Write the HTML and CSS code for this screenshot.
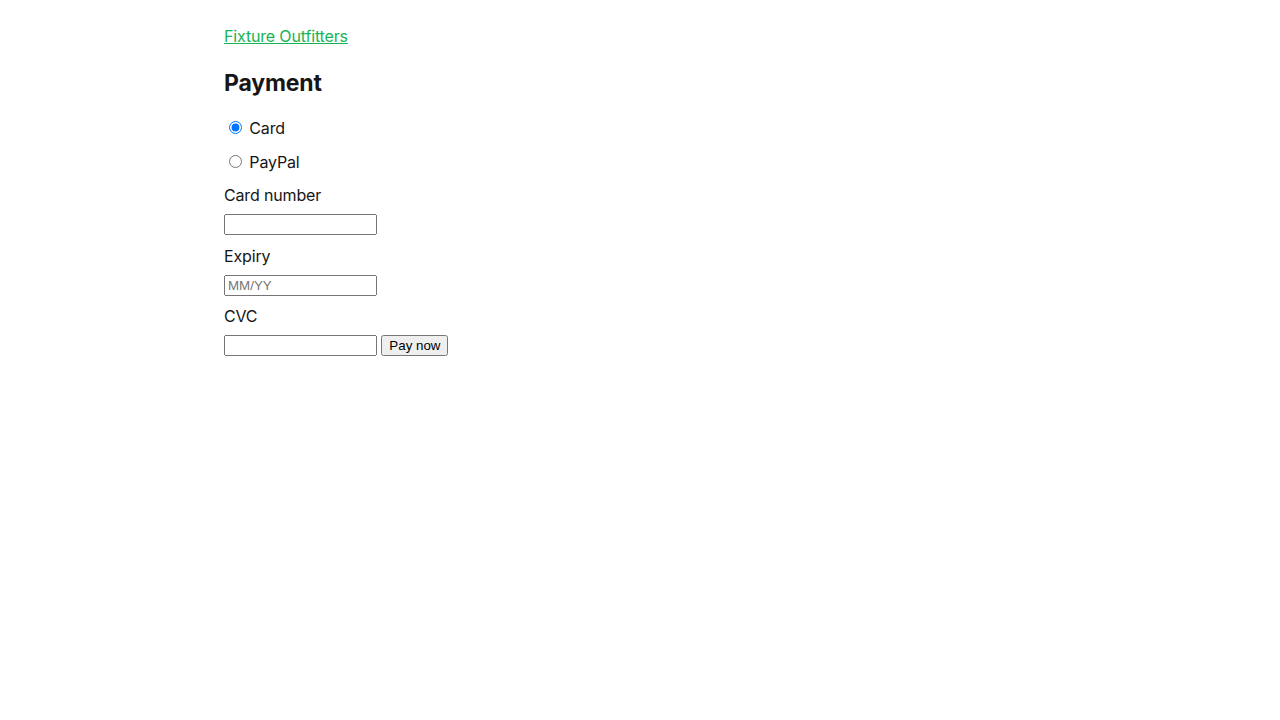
FILE: index.html
```html
<!DOCTYPE html>
<html lang="en">
<head>
<meta charset="utf-8">
<title>Payment</title>
<link rel="stylesheet" href="styles.css">
</head>
<body>
<main class="page">
  <header class="site-header">
    <a class="brand" href="#">Fixture Outfitters</a>
  </header>
  <h1 class="title">Payment</h1>
  <form class="pay-form">
    <div class="methods">
      <label class="method"><input type="radio" name="method" checked> Card</label>
      <label class="method"><input type="radio" name="method"> PayPal</label>
    </div>
    <label class="field-label" for="cc">Card number</label>
    <div class="field"><input class="text-input" id="cc" type="text"></div>
    <label class="field-label" for="exp">Expiry</label>
    <div class="field"><input class="text-input" id="exp" type="text" placeholder="MM/YY"></div>
    <label class="field-label" for="cvc">CVC</label>
    <div class="field"><input class="text-input" id="cvc" type="text"> <button class="pay-btn" type="button">Pay now</button></div>
  </form>
</main>
</body>
</html>
```
FILE: styles.css
```css
body {
  margin: 0;
  background: #fff;
  color: #161616;
  font-family: Inter, "Noto Sans", sans-serif;
  font-size: 16px;
  line-height: 24px;
  letter-spacing: -0.01em;
}
.page {
  max-width: 832px;
  margin: 0 auto;
  padding: 24px 0;
}
.brand {
  color: #16b455;
}
.title {
  font-size: 23px;
  font-weight: 700;
  line-height: 28px;
  margin: 21px 0 19px;
}
.pay-form {
  display: flex;
  flex-direction: column;
  gap: 6px;
}
.methods {
  display: flex;
  flex-direction: column;
  gap: 10px;
  margin-bottom: 3px;
}
.method {
  display: block;
}
.field-label {
  display: block;
  margin-bottom: 1px;
}
.field {
  line-height: 21px;
  margin-bottom: 2.5px;
}
.text-input {
  box-sizing: border-box;
  width: 153px;
  height: 21px;
  margin: 0;
  font-family: Arial, "Liberation Sans", sans-serif;
  font-size: 13.33px;
  letter-spacing: 0;
  vertical-align: top;
}
.pay-btn {
  box-sizing: border-box;
  height: 21px;
  margin: 0;
  padding: 1px 6px;
  font-family: Arial, "Liberation Sans", sans-serif;
  font-size: 13.33px;
  letter-spacing: 0;
  vertical-align: top;
}
```
